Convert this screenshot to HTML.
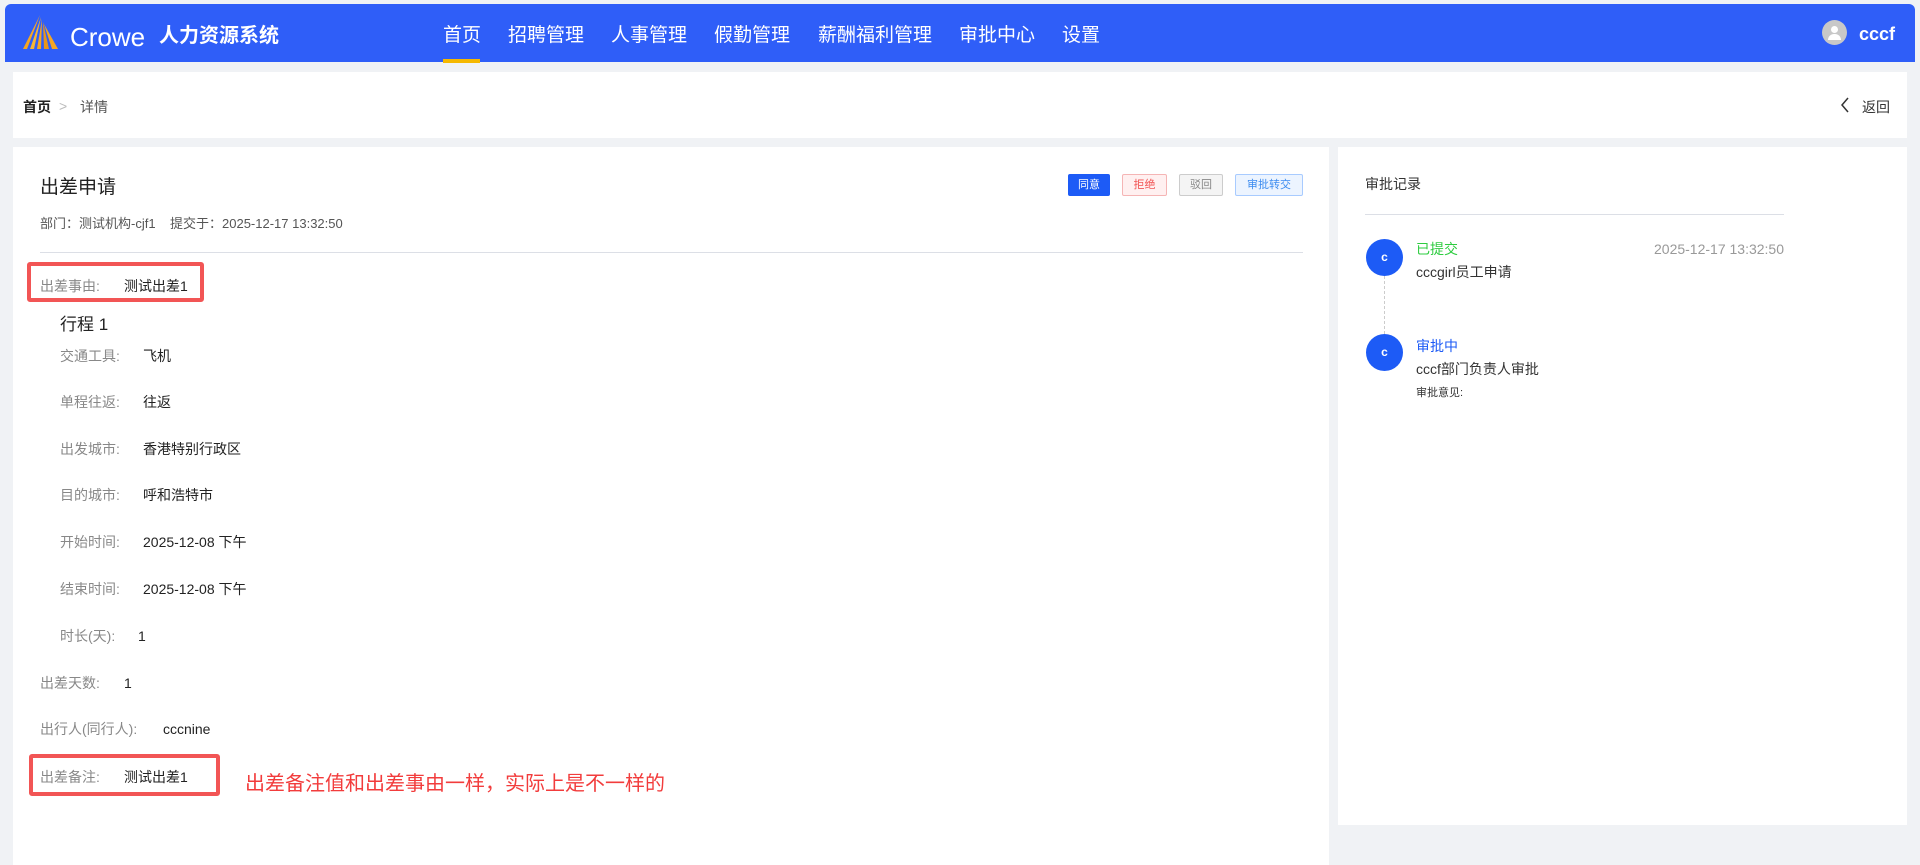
<!DOCTYPE html>
<html><head><meta charset="utf-8"><style>
*{margin:0;padding:0;box-sizing:border-box}
body{width:1920px;height:865px;background:#f0f2f5;font-family:"Liberation Sans","Noto Sans CJK SC",sans-serif;color:#333;position:relative;overflow:hidden}
.a{position:absolute;white-space:nowrap;line-height:1.8}
.hdr{position:absolute;left:5px;top:4px;width:1910px;height:58px;background:#2f5ef8;border-radius:6px 6px 0 0}
.nav{color:#fff;font-size:19px;top:19px}
.lbl{color:#888;font-size:14px}
.val{color:#222;font-size:14px}
.btn{position:absolute;top:174px;height:22px;font-size:11px;line-height:20px;text-align:center;border-radius:2px;border:1px solid}
</style></head><body>
<div class="hdr"></div>
<svg class="a" style="left:22px;top:14px" width="42" height="36" viewBox="0 0 42 36"><path d="M18 1 L1 35 L5 35 Z" fill="#f5a623"/><path d="M19 3 L8 35 L12 35 Z" fill="#f7b733"/><path d="M20 5 L15 35 L19 35 Z" fill="#f5a623"/><path d="M21 8 L22 35 L27 35 Z" fill="#e8951a"/><path d="M22 10 L30 35 L36 35 Z" fill="#f5a623"/></svg>
<div class="a" style="left:70px;top:14px;color:#fff;font-size:26px">Crowe</div>
<div class="a" style="left:159px;top:18px;color:#fff;font-size:20px;font-weight:bold">人力资源系统</div>
<div class="a nav" style="left:443px">首页</div>
<div class="a" style="left:443px;top:59px;width:37px;height:4px;background:#f5b800"></div>
<div class="a nav" style="left:508px">招聘管理</div>
<div class="a nav" style="left:611px">人事管理</div>
<div class="a nav" style="left:714px">假勤管理</div>
<div class="a nav" style="left:818px">薪酬福利管理</div>
<div class="a nav" style="left:959px">审批中心</div>
<div class="a nav" style="left:1062px">设置</div>
<div class="a" style="left:1822px;top:20px;width:25px;height:25px;border-radius:50%;background:#c8c8c8"><div class="a" style="left:9px;top:6px;width:7px;height:7px;border-radius:50%;background:#fff"></div><div class="a" style="left:6px;top:14px;width:13px;height:6px;border-radius:6px 6px 0 0;background:#fff"></div></div>
<div class="a" style="left:1859px;top:18px;color:#fff;font-size:18px;font-weight:bold">cccf</div>

<div class="a" style="left:13px;top:72px;width:1894px;height:66px;background:#fff"></div>
<div class="a" style="left:23px;top:95px;font-size:14px;color:#222;font-weight:bold">首页</div>
<div class="a" style="left:59px;top:94px;font-size:14px;color:#bbb">&gt;</div>
<div class="a" style="left:80px;top:95px;font-size:14px;color:#555">详情</div>
<svg class="a" style="left:1840px;top:97px" width="10" height="16"><path d="M8 1 L2 8 L8 15" stroke="#333" stroke-width="1.5" fill="none"/></svg>
<div class="a" style="left:1862px;top:95px;font-size:14px;color:#333">返回</div>

<div class="a" style="left:13px;top:147px;width:1316px;height:718px;background:#fff"></div>
<div class="a" style="left:1338px;top:147px;width:569px;height:678px;background:#fff"></div>

<div class="a" style="left:40px;top:171px;font-size:19px;color:#222">出差申请</div>
<div class="btn" style="left:1068px;width:42px;background:#1d5bf6;border-color:#1d5bf6;color:#fff">同意</div>
<div class="btn" style="left:1122px;width:45px;background:#fff0f0;border-color:#f5b5b5;color:#f25555">拒绝</div>
<div class="btn" style="left:1179px;width:44px;background:#f4f4f4;border-color:#ccc;color:#888">驳回</div>
<div class="btn" style="left:1235px;width:68px;background:#ecf4ff;border-color:#a8cbff;color:#3c8cf0">审批转交</div>
<div class="a" style="left:40px;top:212px;font-size:13px;color:#555">部门：测试机构-cjf1&nbsp;&nbsp;&nbsp;&nbsp;提交于：2025-12-17 13:32:50</div>
<div class="a" style="left:40px;top:252px;width:1263px;height:1px;background:#dcdfe6"></div>

<div class="a" style="left:27px;top:262px;width:177px;height:40px;border:4px solid #f25555;border-radius:3px"></div>
<div class="a lbl" style="left:40px;top:274px">出差事由:</div><div class="a val" style="left:124px;top:274px">测试出差1</div>
<div class="a" style="left:60px;top:310px;font-size:17px;color:#222">行程 1</div>
<div class="a lbl" style="left:60px;top:344px">交通工具:</div><div class="a val" style="left:143px;top:344px">飞机</div>
<div class="a lbl" style="left:60px;top:390px">单程往返:</div><div class="a val" style="left:143px;top:390px">往返</div>
<div class="a lbl" style="left:60px;top:437px">出发城市:</div><div class="a val" style="left:143px;top:437px">香港特别行政区</div>
<div class="a lbl" style="left:60px;top:483px">目的城市:</div><div class="a val" style="left:143px;top:483px">呼和浩特市</div>
<div class="a lbl" style="left:60px;top:530px">开始时间:</div><div class="a val" style="left:143px;top:530px">2025-12-08 下午</div>
<div class="a lbl" style="left:60px;top:577px">结束时间:</div><div class="a val" style="left:143px;top:577px">2025-12-08 下午</div>
<div class="a lbl" style="left:60px;top:624px">时长(天):</div><div class="a val" style="left:138px;top:624px">1</div>
<div class="a lbl" style="left:40px;top:671px">出差天数:</div><div class="a val" style="left:124px;top:671px">1</div>
<div class="a lbl" style="left:40px;top:717px">出行人(同行人):</div><div class="a val" style="left:163px;top:717px">cccnine</div>
<div class="a" style="left:29px;top:754px;width:191px;height:42px;border:4px solid #f25555;border-radius:3px"></div>
<div class="a lbl" style="left:40px;top:765px">出差备注:</div><div class="a val" style="left:124px;top:765px">测试出差1</div>
<div class="a" style="left:245px;top:766px;font-size:20px;color:#f23c3c">出差备注值和出差事由一样，实际上是不一样的</div>

<div class="a" style="left:1365px;top:172px;font-size:14px;color:#333">审批记录</div>
<div class="a" style="left:1365px;top:214px;width:419px;height:1px;background:#dcdfe6"></div>
<div class="a" style="left:1384px;top:276px;height:58px;border-left:1px dashed #ccc"></div>
<div class="a" style="left:1366px;top:239px;width:37px;height:37px;border-radius:50%;background:#1d5bf6;color:#fff;font-size:12px;font-weight:bold;text-align:center;line-height:37px">c</div>
<div class="a" style="left:1366px;top:334px;width:37px;height:37px;border-radius:50%;background:#1d5bf6;color:#fff;font-size:12px;font-weight:bold;text-align:center;line-height:37px">c</div>
<div class="a" style="left:1416px;top:237px;font-size:14px;color:#2ecc40">已提交</div>
<div class="a" style="left:1634px;top:237px;width:150px;text-align:right;font-size:14px;color:#999">2025-12-17 13:32:50</div>
<div class="a" style="left:1416px;top:260px;font-size:14px;color:#333">cccgirl员工申请</div>
<div class="a" style="left:1416px;top:334px;font-size:14px;color:#1d5bf6">审批中</div>
<div class="a" style="left:1416px;top:357px;font-size:14px;color:#333">cccf部门负责人审批</div>
<div class="a" style="left:1416px;top:384px;font-size:11px;color:#333">审批意见:</div>
</body></html>
